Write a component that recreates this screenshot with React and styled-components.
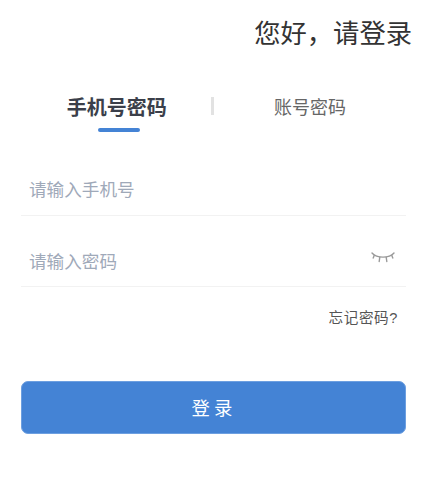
import React, { useState } from 'react';
import styled, { createGlobalStyle } from 'styled-components';

const GlobalStyle = createGlobalStyle`
  html, body {
    margin: 0;
    padding: 0;
    background: #fff;
    font-family: "Liberation Sans", "Noto Sans CJK SC", sans-serif;
  }
  * {
    box-sizing: border-box;
  }
`;

const Page = styled.div`
  width: 439px;
  height: 479px;
  padding: 16px 27px 0 21px;
  overflow: hidden;
`;

const Title = styled.h1`
  margin: 0;
  font-size: 26.3px;
  line-height: 36px;
  font-weight: 400;
  color: #333;
  text-align: right;
`;

const Tabs = styled.div`
  display: flex;
  align-items: flex-start;
  margin-top: 41px;
  width: 385px;
`;

const Tab = styled.div`
  flex: ${(p) => (p.$first ? '0 0 189.5px' : '1')};
  position: relative;
  height: 40px;
  padding-top: 1px;
  padding-left: ${(p) => (p.$first ? '2px' : '0')};
  text-align: center;
  line-height: 28px;
  font-size: ${(p) => (p.$active ? '20px' : '18px')};
  font-weight: ${(p) => (p.$active ? 700 : 400)};
  color: ${(p) => (p.$active ? '#3b3f4a' : '#666')};
  cursor: pointer;
`;

const Underline = styled.span`
  position: absolute;
  left: 77px;
  top: 35px;
  width: 42px;
  height: 4px;
  border-radius: 2px;
  background: #4483d5;
`;

const Divider = styled.div`
  width: 3.5px;
  height: 18px;
  margin-top: 4px;
  background: #e2e2e2;
`;

const Form = styled.div`
  width: 385px;
  margin-top: 26px;
`;

const Field = styled.div`
  display: flex;
  align-items: center;
  height: 57px;
  padding: 6px 11px 0 8px;
  border-bottom: 1px solid #f2f2f2;
  & + & {
    height: 71px;
    padding-top: 23px;
  }
`;

const Input = styled.input`
  flex: 1;
  min-width: 0;
  border: none;
  outline: none;
  padding: 0;
  font-family: inherit;
  font-size: 17.6px;
  color: #333;
  &::placeholder {
    color: #9fa9b9;
    opacity: 1;
  }
`;

const EyeButton = styled.button`
  display: flex;
  border: none;
  background: none;
  padding: 0;
  margin-top: -9px;
  cursor: pointer;
`;

const Forgot = styled.a`
  display: block;
  margin-top: 22px;
  padding-right: 8px;
  font-size: 14.6px;
  line-height: 18px;
  color: #555;
  text-align: right;
  letter-spacing: 0.6px;
  cursor: pointer;
`;

const Submit = styled.button`
  display: block;
  width: 100%;
  height: 53px;
  margin-top: 54px;
  padding: 0 0 2px 1px;
  border: 1px solid #6d9fe0;
  border-radius: 7px;
  background: #4483d5;
  color: #fff;
  font-family: inherit;
  font-size: 18.4px;
  letter-spacing: 4px;
  cursor: pointer;
`;

const ClosedEye = () => (
  <svg width="24" height="12" viewBox="0 0 24 12" fill="none" stroke="#9a9a9a" strokeWidth="1.4" strokeLinecap="round">
    <path d="M1 1C6 6.5 18 6.5 23 1" />
    <path d="M3.2 3.4L2.2 6M8.8 5.2L8.2 9.5M15.2 5.2L15.8 9.5M20.8 3.4L21.8 6" />
  </svg>
);

const App = () => {
  const [tab, setTab] = useState('phone');

  return (
    <Page>
      <GlobalStyle />
      <Title>您好，请登录</Title>
      <Tabs>
        <Tab $first $active={tab === 'phone'} onClick={() => setTab('phone')}>
          手机号密码
          {tab === 'phone' && <Underline />}
        </Tab>
        <Divider />
        <Tab $active={tab === 'account'} onClick={() => setTab('account')}>
          账号密码
          {tab === 'account' && <Underline />}
        </Tab>
      </Tabs>
      <Form>
        <Field>
          <Input placeholder="请输入手机号" />
        </Field>
        <Field>
          <Input type="password" placeholder="请输入密码" />
          <EyeButton type="button">
            <ClosedEye />
          </EyeButton>
        </Field>
        <Forgot>忘记密码?</Forgot>
        <Submit type="button">登录</Submit>
      </Form>
    </Page>
  );
};

export default App;
